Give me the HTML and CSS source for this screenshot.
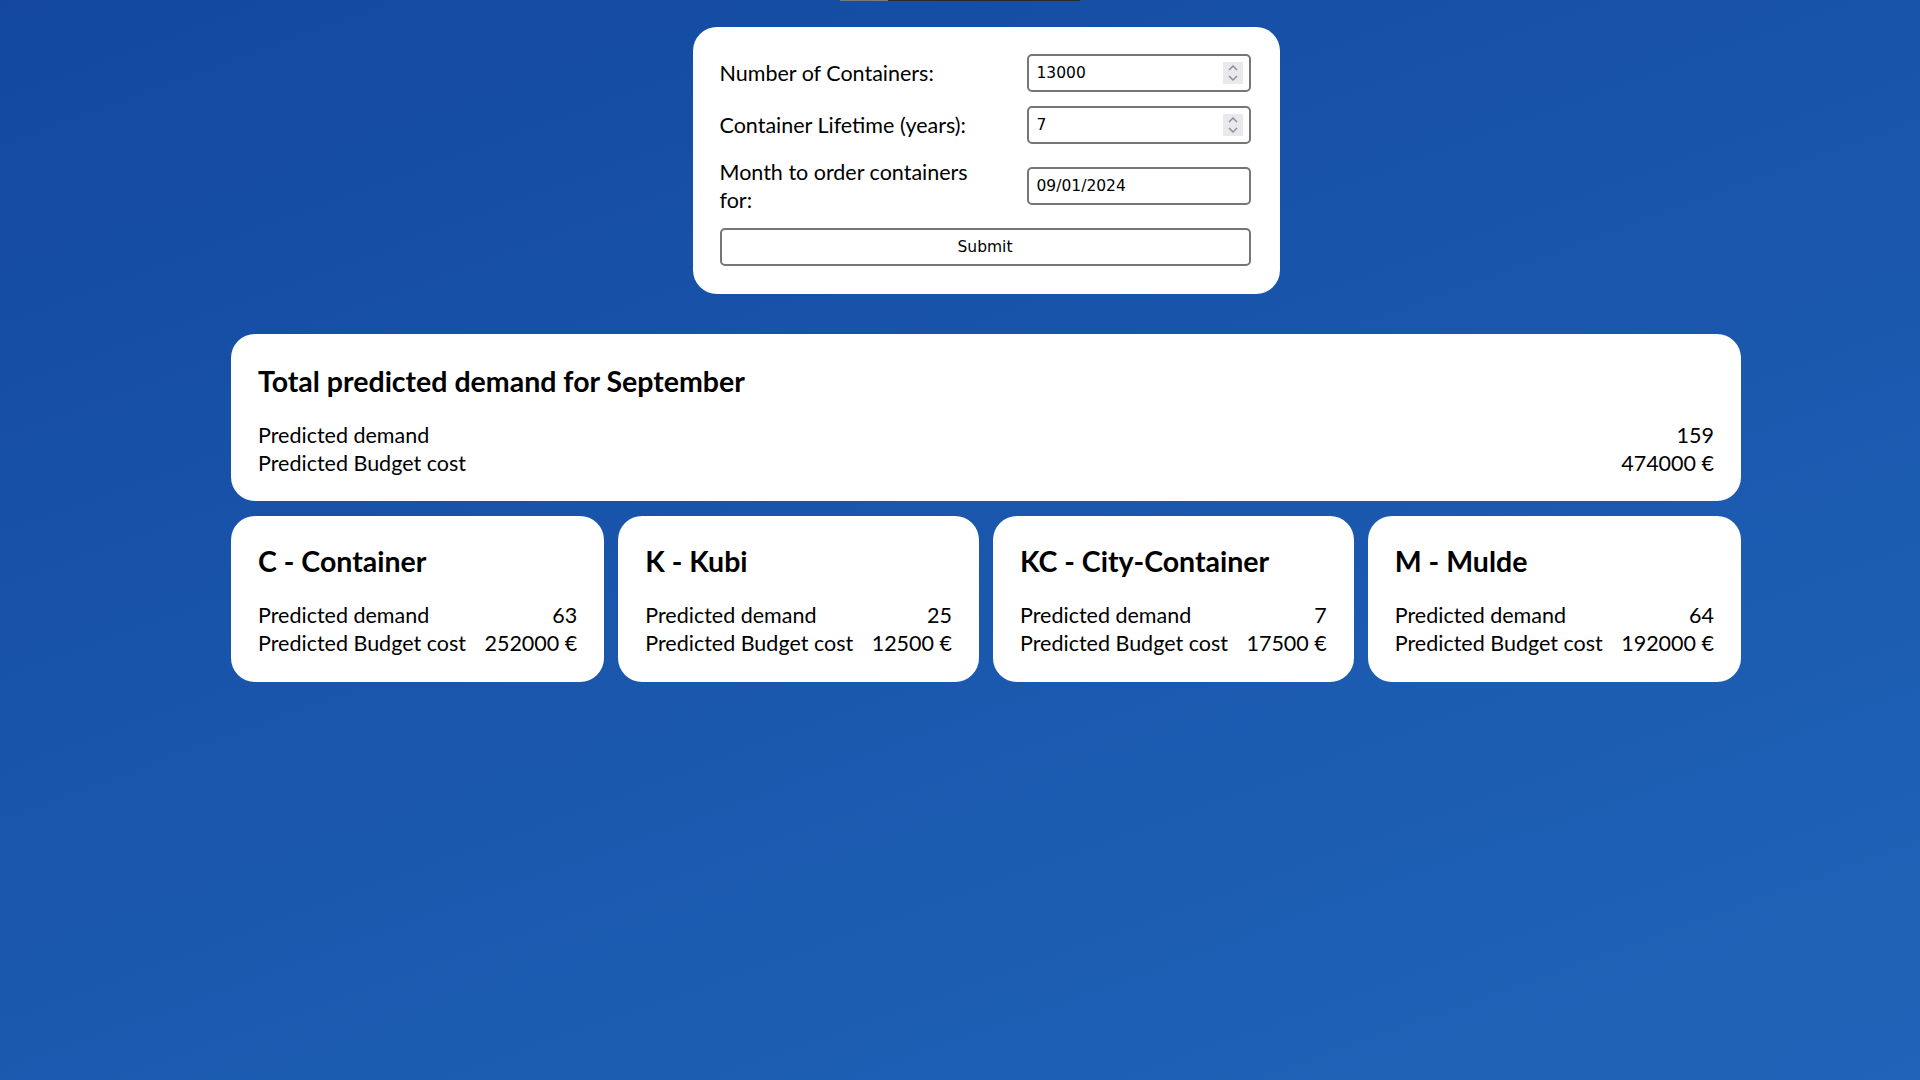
FILE: index.html
```html
<!DOCTYPE html>
<html lang="en">
<head>
<meta charset="utf-8">
<title>Container demand prediction</title>
<link rel="stylesheet" href="styles.css">
</head>
<body>
<div class="topbar"><span class="topbar-light"></span><span class="topbar-dark"></span></div>
<main class="page">
  <form class="form-card">
    <label class="form-label" for="num">Number of Containers:</label>
    <div class="field">
      <input class="field-input" id="num" type="text" value="13000">
      <span class="spinner"><svg width="12" height="18" viewBox="0 0 12 18"><path d="M2 6 L6 2 L10 6" fill="none" stroke="#8a8a8a" stroke-width="1.4"/><path d="M2 12 L6 16 L10 12" fill="none" stroke="#8a8a8a" stroke-width="1.4"/></svg></span>
    </div>
    <label class="form-label" for="life">Container Lifetime (years):</label>
    <div class="field">
      <input class="field-input" id="life" type="text" value="7">
      <span class="spinner"><svg width="12" height="18" viewBox="0 0 12 18"><path d="M2 6 L6 2 L10 6" fill="none" stroke="#8a8a8a" stroke-width="1.4"/><path d="M2 12 L6 16 L10 12" fill="none" stroke="#8a8a8a" stroke-width="1.4"/></svg></span>
    </div>
    <label class="form-label" for="month">Month to order containers for:</label>
    <div class="field">
      <input class="field-input" id="month" type="text" value="09/01/2024">
    </div>
    <button class="submit" type="button">Submit</button>
  </form>

  <section class="card total-card">
    <h2 class="card-title">Total predicted demand for September</h2>
    <div class="row"><span>Predicted demand</span><span>159</span></div>
    <div class="row"><span>Predicted Budget cost</span><span>474000 €</span></div>
  </section>

  <div class="card-row">
    <section class="card small-card">
      <h2 class="card-title">C - Container</h2>
      <div class="row"><span>Predicted demand</span><span>63</span></div>
      <div class="row"><span>Predicted Budget cost</span><span>252000 €</span></div>
    </section>
    <section class="card small-card">
      <h2 class="card-title">K - Kubi</h2>
      <div class="row"><span>Predicted demand</span><span>25</span></div>
      <div class="row"><span>Predicted Budget cost</span><span>12500 €</span></div>
    </section>
    <section class="card small-card">
      <h2 class="card-title">KC - City-Container</h2>
      <div class="row"><span>Predicted demand</span><span>7</span></div>
      <div class="row"><span>Predicted Budget cost</span><span>17500 €</span></div>
    </section>
    <section class="card small-card">
      <h2 class="card-title">M - Mulde</h2>
      <div class="row"><span>Predicted demand</span><span>64</span></div>
      <div class="row"><span>Predicted Budget cost</span><span>192000 €</span></div>
    </section>
  </div>
</main>
</body>
</html>
```
FILE: styles.css
```css
html, body {
  margin: 0;
  padding: 0;
}
body {
  min-height: 1080px;
  background: linear-gradient(160deg, #1448a0 0%, #1a58ae 55%, #1f64b8 100%);
  font-family: "Lato", "Open Sans", sans-serif;
  color: #000;
  position: relative;
}
.topbar {
  position: absolute;
  top: 0;
  left: 840px;
  display: flex;
  height: 1px;
}
.topbar-light { width: 48px; background: #7a7a7a; }
.topbar-dark { width: 192px; background: #2a2a2a; }

.page {
  width: 1510px;
  margin: 0 auto;
  padding: 27px 0 0 52px;
  display: flex;
  flex-direction: column;
  align-items: center;
}
.form-card {
  width: 587px;
  box-sizing: border-box;
  background: #fff;
  border-radius: 24px;
  padding: 27px 29px 28px 27px;
  display: grid;
  grid-template-columns: 262px 224px;
  justify-content: space-between;
  align-items: center;
  row-gap: 14px;
  margin-bottom: 40px;
}
.form-label {
  font-size: 21.5px;
  line-height: 28px;
}
.field {
  position: relative;
  height: 38px;
}
.field-input {
  width: 100%;
  height: 38px;
  box-sizing: border-box;
  border: 2px solid #767676;
  border-radius: 5px;
  padding: 0 8px;
  font-family: "DejaVu Sans", "Liberation Sans", sans-serif;
  font-size: 15.5px;
  color: #000;
  background: #fff;
  outline: none;
}
.spinner {
  position: absolute;
  right: 8px;
  top: 8px;
  width: 20px;
  height: 22px;
  background: #e9e9ed;
  display: flex;
  align-items: center;
  justify-content: center;
}
.submit {
  grid-column: 1 / span 2;
  height: 38px;
  box-sizing: border-box;
  border: 2px solid #767676;
  border-radius: 5px;
  background: #fff;
  font-family: "DejaVu Sans", "Liberation Sans", sans-serif;
  font-size: 15.5px;
  color: #000;
  padding: 0;
}

.card {
  background: #fff;
  border-radius: 24px;
  box-sizing: border-box;
}
.total-card {
  width: 100%;
  padding: 29px 27px 24px 27px;
}
.card-title {
  margin: 0 0 22px 0;
  font-size: 28.5px;
  line-height: 36px;
  font-weight: 700;
}
.row {
  display: flex;
  justify-content: space-between;
  gap: 12px;
  font-size: 21.5px;
  line-height: 28px;
  white-space: nowrap;
}
.card-row {
  width: 100%;
  display: flex;
  gap: 14px;
  margin-top: 15px;
}
.small-card {
  flex: 1 1 auto;
  padding: 27px 27px 25px 27px;
}
```
